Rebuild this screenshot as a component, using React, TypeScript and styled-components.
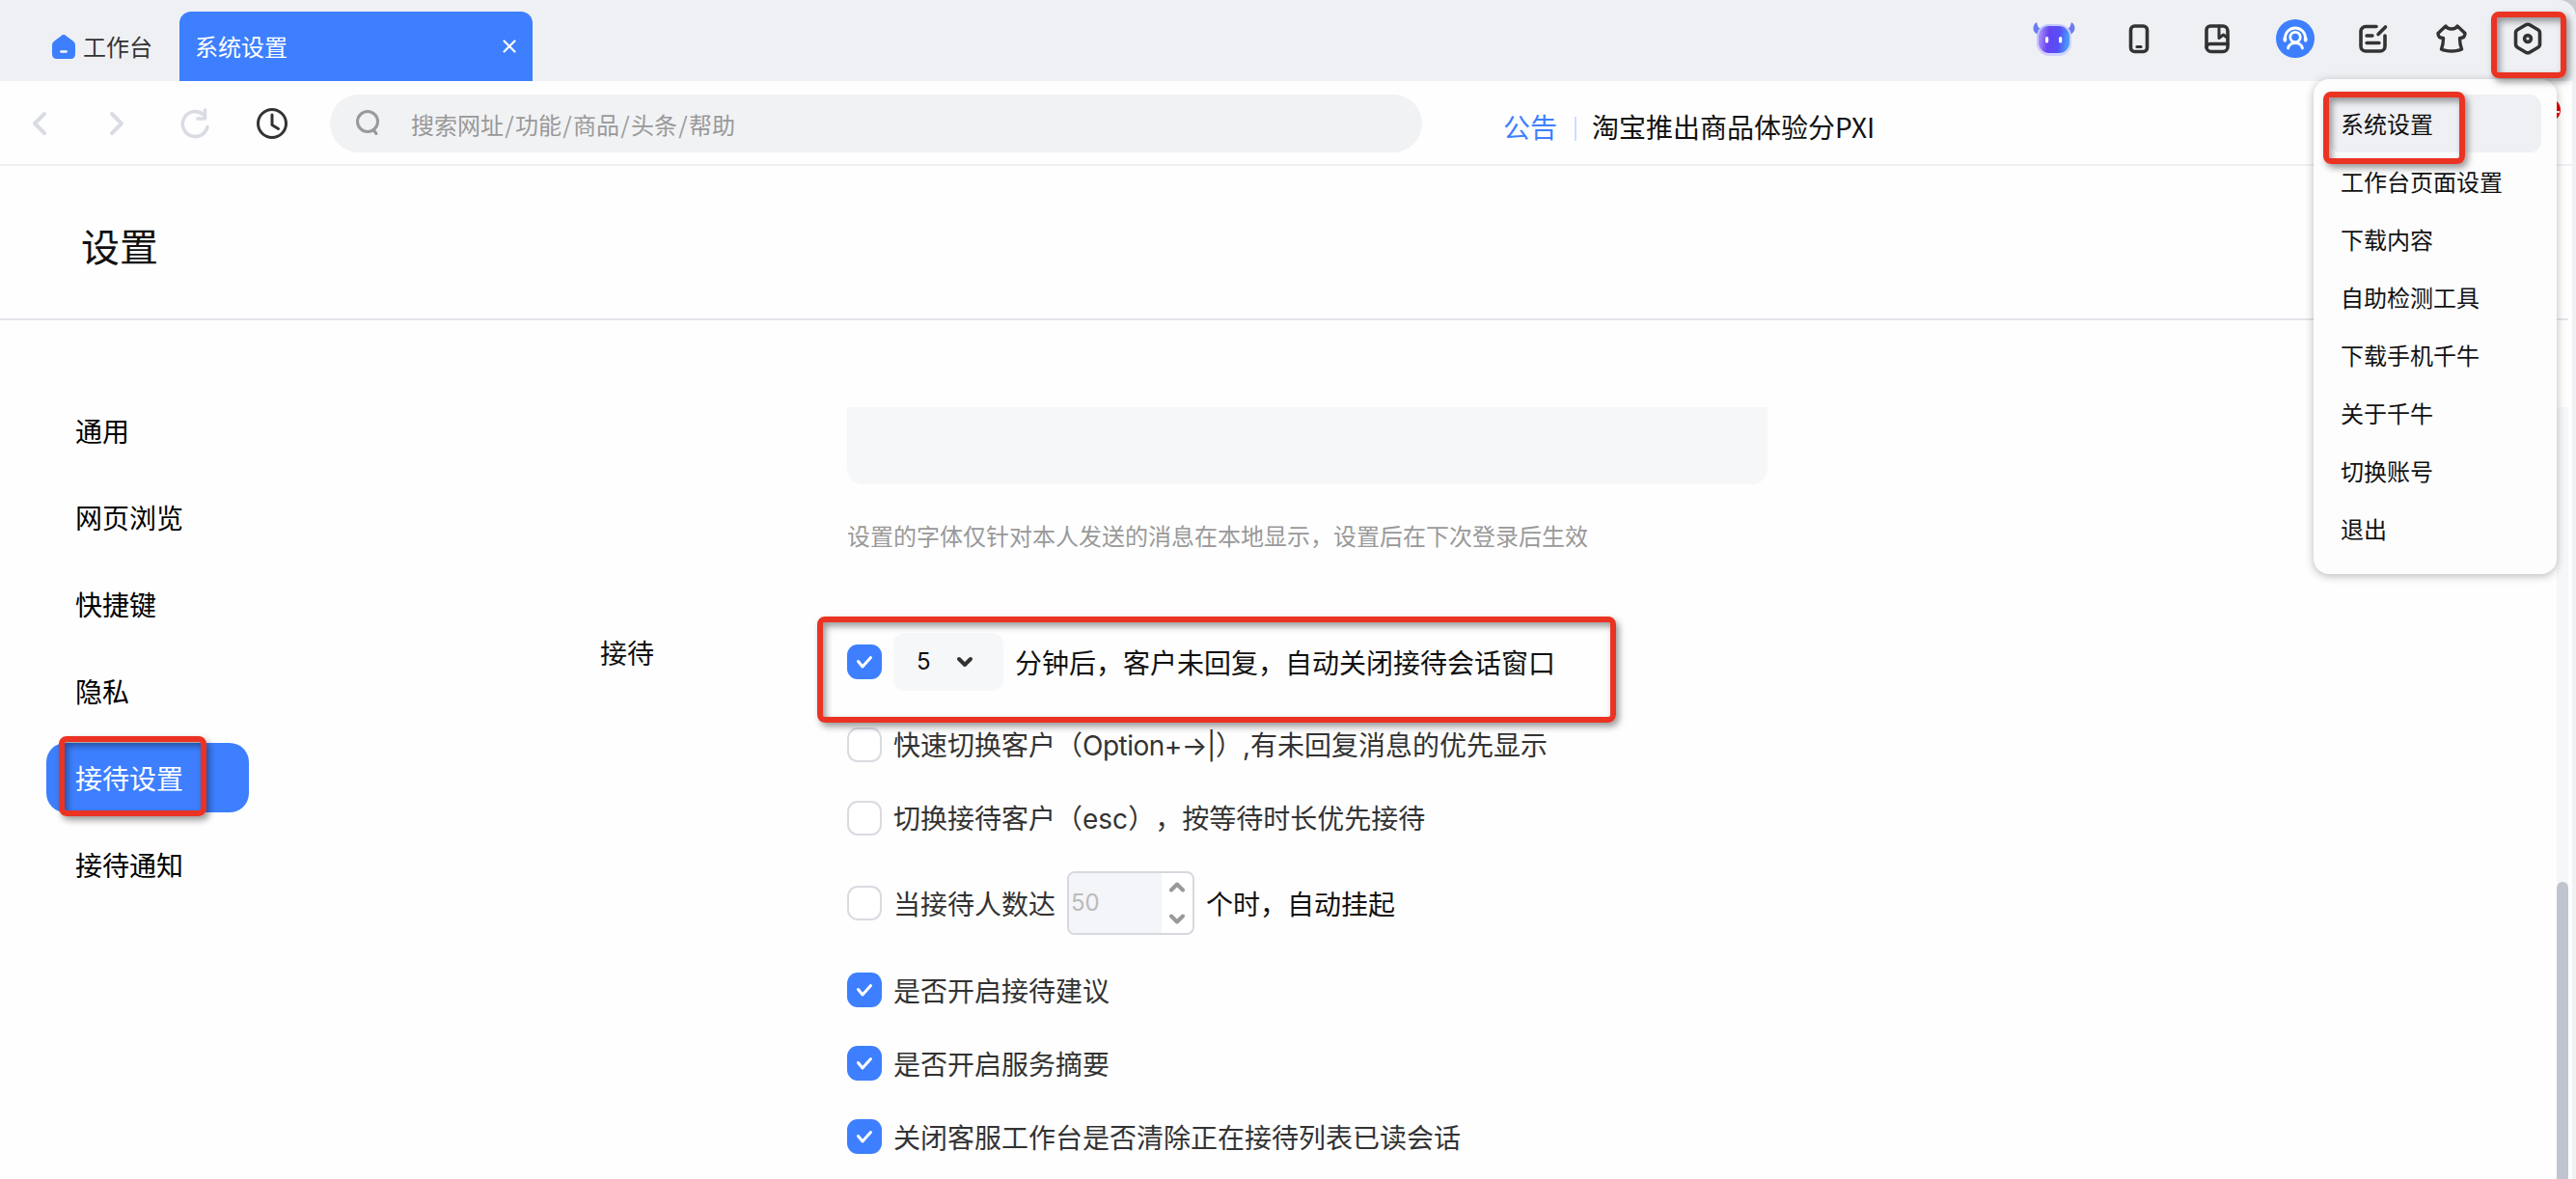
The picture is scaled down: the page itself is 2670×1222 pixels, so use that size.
import React from 'react';
import styled, { createGlobalStyle } from 'styled-components';

const GlobalStyle = createGlobalStyle`
  * { box-sizing: border-box; }
  html, body { margin: 0; padding: 0; background: #fff; }
  body {
    font-family: 'Noto Sans CJK SC', sans-serif;
    text-spacing-trim: space-all;
    color: #111;
    overflow: hidden;
  }
`;

const BLUE = '#3d7fff';
const INK = '#333';

const Window = styled.div`
  position: relative;
  width: 2670px;
  height: 1222px;
  display: flex;
  flex-direction: column;
  overflow: hidden;
  background: #fefefe;
`;

/* ---------- Title bar ---------- */
const TitleBarBack = styled.div`
  flex: none;
  background: #c9cacd;
`;

const TitleBar = styled.header`
  height: 84px;
  padding-left: 52px;
  padding-right: 11px;
  display: flex;
  align-items: flex-end;
  background: #eff0f4;
  border-top-right-radius: 18px;
`;

const HomeTab = styled.div`
  width: 134px;
  height: 72px;
  display: flex;
  align-items: center;
  gap: 6px;
  font-size: 24px;
  line-height: 36px;
  color: ${INK};
  white-space: nowrap;
`;

const ActiveTab = styled.div`
  width: 366px;
  height: 72px;
  padding: 0 16px;
  display: flex;
  align-items: center;
  justify-content: space-between;
  border-radius: 12px 12px 0 0;
  background: ${BLUE};
  color: #fff;
  font-size: 24px;
  line-height: 36px;
`;

const ToolIcons = styled.div`
  align-self: flex-start;
  margin-left: auto;
  height: 80px;
  display: flex;
  align-items: center;
`;

const ToolCell = styled.div<{ $w?: number }>`
  width: ${p => p.$w ?? 81}px;
  display: flex;
  justify-content: center;
  svg { display: block; }
`;

/* ---------- Navigation bar ---------- */
const NavBar = styled.div`
  flex: none;
  height: 88px;
  margin-right: 4px;
  display: flex;
  align-items: center;
  border-bottom: 2px solid #eeeff3;
`;

const NavButtons = styled.div`
  width: 342px;
  padding: 2px 0 0 25px;
  display: flex;
  align-items: center;
  svg { display: block; }
`;

const NavButton = styled.div<{ $w: number }>`
  width: ${p => p.$w}px;
  display: flex;
`;

const SearchBox = styled.div`
  width: 1132px;
  height: 60px;
  margin-top: 2px;
  padding-left: 26px;
  display: flex;
  align-items: center;
  gap: 30px;
  border-radius: 30px;
  background: #f1f2f4;
  color: #999;
  font-size: 24px;
  line-height: 36px;
`;

const Placeholder = styled.span`
  padding-top: 2px;
  display: flex;
`;

const Slash = styled.span`
  width: 12px;
  text-align: center;
`;

const Notice = styled.div`
  margin-left: 84px;
  margin-top: 8px;
  display: flex;
  align-items: center;
  font-size: 28px;
  line-height: 40px;
`;

const NoticeTag = styled.span`
  color: ${BLUE};
`;

const NoticeRule = styled.span`
  width: 2px;
  height: 25px;
  margin: 5px 16px 0 18px;
  background: #cfdefb;
`;

/* ---------- Page ---------- */
const PageHead = styled.div`
  flex: none;
  height: 160px;
  margin-right: 8px;
  padding: 50px 0 0 84px;
  border-bottom: 2px solid #e3e5ea;
`;

const PageTitle = styled.h1`
  margin: 0;
  font-size: 40px;
  line-height: 64px;
  font-weight: 400;
`;

const Body = styled.div`
  flex: 1;
  min-height: 0;
  padding-top: 90px;
  display: flex;
  align-items: stretch;
`;

const SideNav = styled.nav`
  width: 210px;
  margin-left: 48px;
  margin-top: -12px;
  display: flex;
  flex-direction: column;
  gap: 18px;
`;

const SideItem = styled.div<{ $active?: boolean }>`
  height: 72px;
  padding-left: 30px;
  border-radius: 20px;
  font-size: 28px;
  line-height: 72px;
  background: ${p => (p.$active ? BLUE : 'transparent')};
  color: ${p => (p.$active ? '#fff' : '#000')};
`;

const SectionLabels = styled.div`
  width: 256px;
  margin-left: 364px;
  padding-top: 234px;
  font-size: 28px;
  line-height: 40px;
`;

const Form = styled.div`
  width: 1000px;
  display: flex;
  flex-direction: column;
  align-items: flex-start;
`;

const FontPreview = styled.div`
  width: 954px;
  height: 80px;
  flex: none;
  border-radius: 0 0 16px 16px;
  background: #f6f7f9;
`;

const Hint = styled.p`
  margin: 35px 0 83px;
  font-size: 24px;
  line-height: 36px;
  color: #999;
`;

const Row = styled.div<{ $h: number }>`
  flex: none;
  height: ${p => p.$h}px;
  display: flex;
  align-items: center;
  font-size: 28px;
  line-height: 40px;
  color: ${INK};
  white-space: nowrap;
`;

const SwitchList = styled.div`
  display: flex;
  flex-direction: column;
  gap: 32px;
`;

const Box = styled.span<{ $on?: boolean }>`
  width: 36px;
  height: 36px;
  margin-right: 12px;
  display: flex;
  align-items: center;
  justify-content: center;
  border-radius: 11px;
  border: ${p => (p.$on ? '0' : '2px solid #d9dbe1')};
  background: ${p => (p.$on ? BLUE : '#fff')};
`;

const Latin = styled.span<{ $spacing?: number }>`
  font-family: Inter, 'Noto Sans CJK SC', sans-serif;
  letter-spacing: ${p => p.$spacing ?? 0}px;
`;

const Strong = styled.span`
  color: #111;
  margin-left: 12px;
`;

const Select = styled.span`
  width: 114px;
  height: 60px;
  padding: 0 30px 0 24px;
  display: flex;
  align-items: center;
  justify-content: space-between;
  border-radius: 12px;
  background: #f6f7f9;
  color: #111;
  font-family: Inter, 'Noto Sans CJK SC', sans-serif;
  font-size: 24px;
`;

const NumberInput = styled.span`
  width: 132px;
  height: 66px;
  margin-left: 12px;
  display: flex;
  border: 2px solid #d5d8df;
  border-radius: 8px;
  overflow: hidden;
  background: #fff;
`;

const NumberValue = styled.span`
  width: 96px;
  padding-left: 2px;
  display: flex;
  align-items: center;
  background: #f4f5f8;
  color: #bbb;
  font-family: Inter, 'Noto Sans CJK SC', sans-serif;
  font-size: 24px;
`;

const Steppers = styled.span`
  flex: 1;
  display: flex;
  flex-direction: column;
  align-items: center;
  justify-content: space-between;
  padding: 8px 0;
  svg { display: block; }
`;

/* ---------- Right edge ---------- */
const ScrollTrack = styled.div`
  margin-left: auto;
  margin-right: 8px;
  width: 12px;
  padding-top: 492px;
  display: flex;
  background: #f5f7f9;
`;

const ScrollThumb = styled.div`
  flex: 1;
  border-radius: 6px 6px 0 0;
  background: #bfc4cf;
`;

const WindowEdge = styled.div`
  position: absolute;
  right: 0;
  top: 84px;
  bottom: 0;
  width: 4px;
  background: #f0f1f5;
`;

/* ---------- Overlays ---------- */
const Badge = styled.div`
  position: absolute;
  left: 2630px;
  top: 102px;
  width: 24px;
  height: 24px;
  display: flex;
  align-items: center;
  justify-content: center;
  border-radius: 50%;
  background: #ec0000;
  &::after {
    content: '';
    width: 22px;
    height: 2px;
    margin-top: 3px;
    background: #fff;
  }
`;

const Menu = styled.div`
  position: absolute;
  left: 2398px;
  top: 82px;
  width: 252px;
  height: 513px;
  padding: 16px 16px;
  border-radius: 16px;
  background: #fdfdfe;
  box-shadow: 0 2px 10px rgba(0, 0, 0, 0.28);
`;

const MenuItem = styled.div<{ $active?: boolean }>`
  height: 60px;
  padding-left: 12px;
  border-radius: 12px;
  font-size: 24px;
  line-height: 59px;
  white-space: nowrap;
  background: ${p => (p.$active ? '#eff0f4' : 'transparent')};
`;

const Marker = styled.div<{ $x: number; $y: number; $w: number; $h: number }>`
  position: absolute;
  left: ${p => p.$x}px;
  top: ${p => p.$y}px;
  width: ${p => p.$w}px;
  height: ${p => p.$h}px;
  border: 6px solid #ea3323;
  border-radius: 8px;
  box-shadow: 3px 4px 7px rgba(0, 0, 0, 0.4), inset 3px 4px 7px rgba(0, 0, 0, 0.4);
`;

const Stroke = ({ w, h, color = INK, sw = 4, children }: {
  w: number; h: number; color?: string; sw?: number; children: React.ReactNode;
}) => (
  <svg width={w} height={h} viewBox={`0 0 ${w} ${h}`} fill="none" stroke={color}
    strokeWidth={sw} strokeLinecap="round" strokeLinejoin="round">{children}</svg>
);

const Check = () => (
  <Stroke w={20} h={18} color="#fff" sw={3}><path d="M3.500 8.500 8 14 16.500 4.500" /></Stroke>
);

const Mascot = () => (
  <svg width="46" height="38" viewBox="0 0 46 38">
    <defs>
      <linearGradient id="face" x1="0" y1="0" x2="1" y2="0.1">
        <stop offset="0" stopColor="#b69cf8" />
        <stop offset="0.35" stopColor="#6644f2" />
        <stop offset="0.7" stopColor="#5550f5" />
        <stop offset="1" stopColor="#489cfb" />
      </linearGradient>
      <linearGradient id="shell" x1="0" y1="0" x2="1" y2="1">
        <stop offset="0" stopColor="#a9c8ff" />
        <stop offset="0.5" stopColor="#d7c9fb" />
        <stop offset="1" stopColor="#c9dcff" />
      </linearGradient>
    </defs>
    <path d="M5 2C0 5 0 13 7 15l4-6C6 9 6 5 5 2Z" fill="#6a7cf0" />
    <path d="M41 2c5 3 5 11-2 13l-4-6c5 0 5-4 6-7Z" fill="#6a7cf0" />
    <rect x="5" y="4" width="36" height="33" rx="13" fill="url(#shell)" />
    <rect x="7" y="6" width="32" height="28" rx="11" fill="url(#face)" />
    <rect x="14" y="17" width="3.200" height="6.500" rx="1.600" fill="#fff" />
    <rect x="28" y="17" width="3.200" height="6.500" rx="1.600" fill="#fff" />
  </svg>
);

const PhoneIcon = () => (
  <Stroke w={22} h={32} sw={3.6}>
    <rect x="2.500" y="3" width="17" height="26.500" rx="4" />
    <path d="M9 24.500h4" strokeWidth="3.200" />
  </Stroke>
);

const BookIcon = () => (
  <Stroke w={28} h={32} sw={3.6}>
    <path d="M7 3h13a5 5 0 0 1 5 5v16.500a5 5 0 0 1-5 5H8a5 5 0 0 1-5-5V7a4 4 0 0 1 4-4Z" />
    <path d="M3 25a3.500 3.500 0 0 1 3.500-3.500H25" />
    <path d="M16 3v12.500l4.500-3.500L25 15.500" strokeWidth="3" />
  </Stroke>
);

const AgentIcon = () => (
  <svg width="40" height="40" viewBox="0 0 40 40" fill="none" stroke="#fff" strokeWidth="2.800" strokeLinecap="round">
    <circle cx="20" cy="20" r="20" fill={BLUE} stroke="none" />
    <circle cx="20" cy="18.500" r="5.200" />
    <path d="M9.500 22v-2.500a10.500 10.500 0 0 1 21 0V22" />
    <path d="M9.300 20v1.500M30.700 20v1.500" strokeWidth="3.800" />
    <path d="M12.500 30c1-3.500 3.500-5.500 7.500-5.500s6.500 2 7.500 5.500" />
  </svg>
);

const NoteIcon = () => (
  <Stroke w={32} h={32} sw={3.6}>
    <path d="M19 3.500H8a5 5 0 0 0-5 5v15.500a5 5 0 0 0 5 5h15a5 5 0 0 0 5-5V13" />
    <path d="M9 13h6M9 20.500h13" strokeWidth="3.400" />
    <path d="M21 11.500 28.500 4" />
  </Stroke>
);

const ShirtIcon = () => (
  <Stroke w={34} h={32} sw={3.4}>
    <path d="M11 3c2 4 10 4 12 0l8 7.500c0 3-2 5-5.500 5 0 5 .5 8 2 11.500-5 2.600-16 2.600-21 0 1.500-3.500 2-6.500 2-11.500C5 15.500 3 13.500 3 10.500Z" />
  </Stroke>
);

const HexIcon = () => (
  <Stroke w={34} h={36} sw={3.6}>
    <path d="M15 3.800a4 4 0 0 1 4 0l8.500 5a4 4 0 0 1 2 3.500v11.400a4 4 0 0 1-2 3.500l-8.500 5a4 4 0 0 1-4 0l-8.500-5a4 4 0 0 1-2-3.500V12.300a4 4 0 0 1 2-3.500Z" />
    <circle cx="17" cy="18" r="3.400" />
  </Stroke>
);

const searchTopics = ['搜索网址', '功能', '商品', '头条', '帮助'];
const sideItems = ['通用', '网页浏览', '快捷键', '隐私', '接待设置', '接待通知'];
const menuItems = ['系统设置', '工作台页面设置', '下载内容', '自助检测工具', '下载手机千牛', '关于千牛', '切换账号', '退出'];
const switches = ['是否开启接待建议', '是否开启服务摘要', '关闭客服工作台是否清除正在接待列表已读会话'];

export default function App() {
  return (
    <Window>
      <GlobalStyle />
      <TitleBarBack>
        <TitleBar>
          <HomeTab>
            <svg width="28" height="28" viewBox="0 0 28 28">
              <path d="M11 3.400q3-2.600 6 0l7 5.400q2 1.500 2 4V22q0 5-5 5H7q-5 0-5-5v-9.200q0-2.500 2-4Z" fill={BLUE} />
              <path d="M11.500 19.500h5" stroke="#fff" strokeWidth="2.600" strokeLinecap="round" />
            </svg>
            工作台
          </HomeTab>
          <ActiveTab>
            系统设置
            <Stroke w={16} h={16} color="#fff" sw={2.2}><path d="M2.500 2.500l11 11M13.500 2.500l-11 11" /></Stroke>
          </ActiveTab>
          <ToolIcons>
            <ToolCell $w={94}><Mascot /></ToolCell>
            <ToolCell><PhoneIcon /></ToolCell>
            <ToolCell><BookIcon /></ToolCell>
            <ToolCell><AgentIcon /></ToolCell>
            <ToolCell><NoteIcon /></ToolCell>
            <ToolCell><ShirtIcon /></ToolCell>
            <ToolCell $w={78}><HexIcon /></ToolCell>
          </ToolIcons>
        </TitleBar>
      </TitleBarBack>

      <NavBar>
        <NavButtons>
          <NavButton $w={80}><Stroke w={32} h={32} color="#d9dce3"><path d="M21 6 11 16l10 10" /></Stroke></NavButton>
          <NavButton $w={80}><Stroke w={32} h={32} color="#d9dce3"><path d="M11 6l10 10-10 10" /></Stroke></NavButton>
          <NavButton $w={80}>
            <Stroke w={34} h={34} color="#d9dce3" sw={3.6}>
              <path d="M30 20.500A13 13 0 1 1 25.500 7.500" />
              <path d="M27.500 3v9H20" />
            </Stroke>
          </NavButton>
          <NavButton $w={40}>
            <Stroke w={34} h={34} sw={3}>
              <circle cx="17" cy="17" r="14.500" />
              <path d="M17 8v10.500l6.500 4" />
            </Stroke>
          </NavButton>
        </NavButtons>
        <SearchBox>
          <Stroke w={28} h={28} color="#999" sw={3}>
            <circle cx="13" cy="12" r="10.500" />
            <path d="M19 20.500l3 4" />
          </Stroke>
          <Placeholder>
            {searchTopics.map((t, i) => (
              <React.Fragment key={t}>
                {i > 0 && <Slash>/</Slash>}
                {t}
              </React.Fragment>
            ))}
          </Placeholder>
        </SearchBox>
        <Notice>
          <NoticeTag>公告</NoticeTag>
          <NoticeRule />
          <span>淘宝推出商品体验分PXI</span>
        </Notice>
      </NavBar>

      <PageHead><PageTitle>设置</PageTitle></PageHead>

      <Body>
        <SideNav>
          {sideItems.map(t => <SideItem key={t} $active={t === '接待设置'}>{t}</SideItem>)}
        </SideNav>
        <SectionLabels>接待</SectionLabels>
        <Form>
          <FontPreview />
          <Hint>设置的字体仅针对本人发送的消息在本地显示，设置后在下次登录后生效</Hint>
          <Row $h={60}>
            <Box $on><Check /></Box>
            <Select>
              5
              <Stroke w={20} h={16}><path d="M4 5l6 6 6-6" /></Stroke>
            </Select>
            <Strong>分钟后，客户未回复，自动关闭接待会话窗口</Strong>
          </Row>
          <Row $h={112}>
            <Box />
            <span>快速切换客户（<Latin $spacing={-0.5}>Option+→|</Latin>）<Latin>,</Latin>有未回复消息的优先显示</span>
          </Row>
          <Row $h={40}>
            <Box />
            <span>切换接待客户（<Latin>esc</Latin>），按等待时长优先接待</span>
          </Row>
          <Row $h={136}>
            <Box />
            <span>当接待人数达</span>
            <NumberInput>
              <NumberValue>50</NumberValue>
              <Steppers>
                <Stroke w={18} h={12} color="#999"><path d="M3 9.500l6-6 6 6" /></Stroke>
                <Stroke w={18} h={12} color="#999"><path d="M3 2.500l6 6 6-6" /></Stroke>
              </Steppers>
            </NumberInput>
            <Strong>个时，自动挂起</Strong>
          </Row>
          <SwitchList>
            {switches.map(t => (
              <Row key={t} $h={44}>
                <Box $on><Check /></Box>
                <span>{t}</span>
              </Row>
            ))}
          </SwitchList>
        </Form>
        <ScrollTrack><ScrollThumb /></ScrollTrack>
      </Body>

      <WindowEdge />
      <Badge />
      <Menu>
        {menuItems.map((t, i) => <MenuItem key={t} $active={i === 0}>{t}</MenuItem>)}
      </Menu>

      <Marker $x={2582} $y={12} $w={78} $h={69} />
      <Marker $x={2408} $y={95} $w={147} $h={75} />
      <Marker $x={61} $y={763} $w={153} $h={83} />
      <Marker $x={847} $y={639} $w={828} $h={110} />
    </Window>
  );
}
